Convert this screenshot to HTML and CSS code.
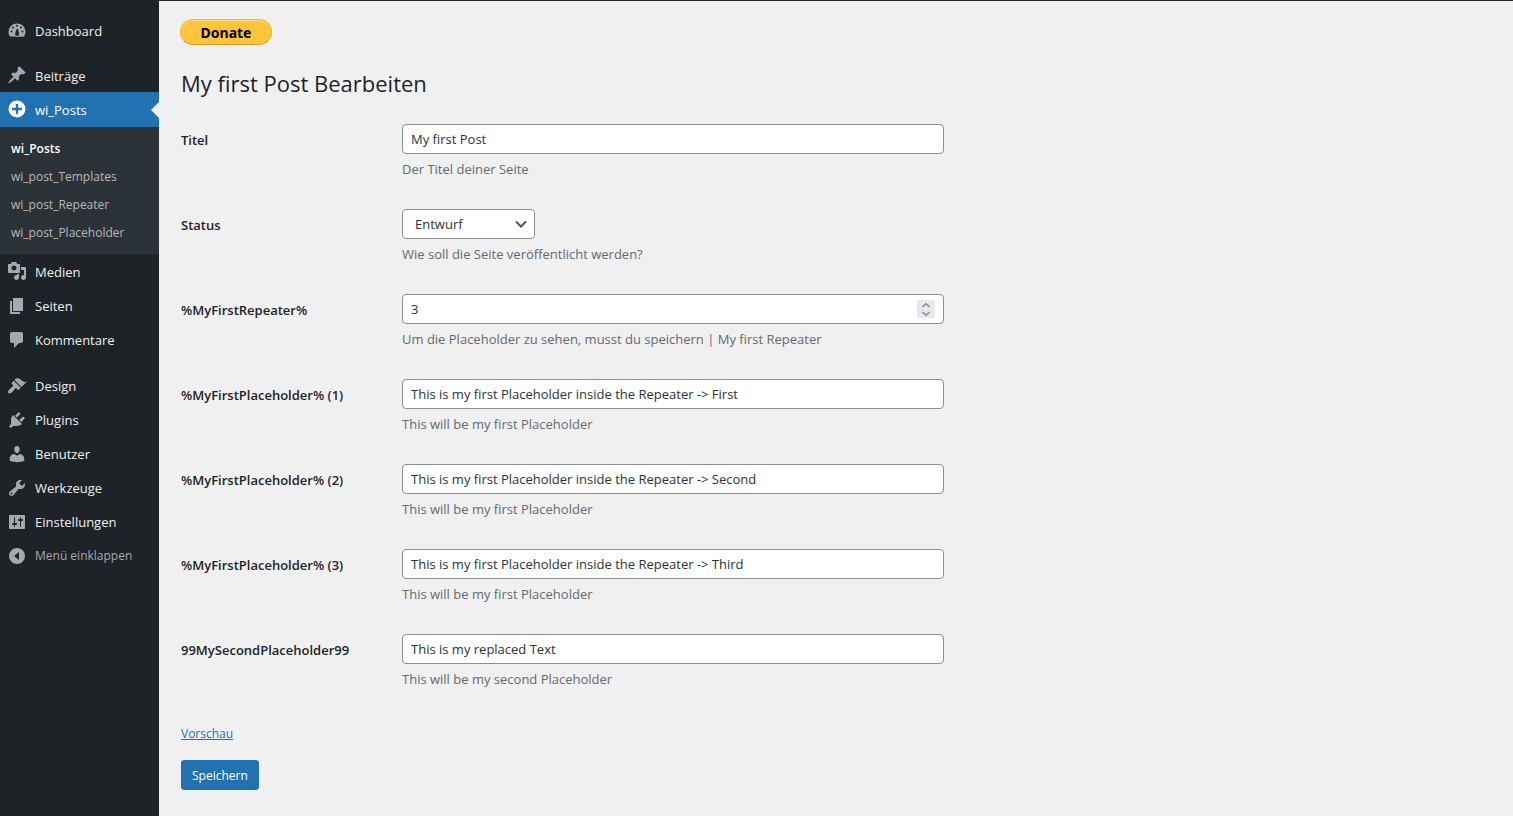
FILE: index.html
```html
<!DOCTYPE html>
<html lang="de">
<head>
    <meta charset="UTF-8">
    <meta name="viewport" content="width=device-width, initial-scale=1.0">
    <title>My first Post Bearbeiten</title>
    <link rel="stylesheet" href="styles.css">
</head>
<body>
    <nav class="admin-menu">
        <ul class="menu">
            <li>
                <a href="#" class="menu-link">
                    <svg class="icon" viewBox="0 1 20 20"><path fill-rule="evenodd" d="M3 16.500C2.200 15.500 1.500 13.700 1.500 11.500a8.500 8 0 0 1 17 0c0 2.200-.7 4-1.500 5-.5.500-13.500.500-14 0zM9.500 9 8.300 13a2 2 0 1 0 3.600 0L11 9zM10 4.800a1 1 0 1 0 0 2 1 1 0 0 0 0-2zM6 6.500a1 1 0 1 0 0 2 1 1 0 0 0 0-2zm8 0a1 1 0 1 0 0 2 1 1 0 0 0 0-2zM4.500 10.500a1 1 0 1 0 0 2 1 1 0 0 0 0-2zm11 0a1 1 0 1 0 0 2 1 1 0 0 0 0-2z"/></svg>
                    Dashboard
                </a>
            </li>
            <li class="group-start">
                <a href="#" class="menu-link">
                    <svg class="icon" viewBox="0 1 20 20"><path d="M10.440 3.020l1.820-1.820 6.360 6.350-1.830 1.820c-1.050-.68-2.480-.57-3.410.36l-.75.75c-.92.93-1.040 2.350-.35 3.410l-1.830 1.820-2.410-2.410-2.800 2.790c-.42.42-3.380 2.710-3.800 2.290s1.860-3.390 2.280-3.810l2.790-2.790L4.100 9.360l1.830-1.820c1.050.69 2.480.57 3.400-.36l.75-.75c.93-.92 1.050-2.350.36-3.410z"/></svg>
                    Beiträge
                </a>
            </li>
            <li class="current">
                <a href="#" class="menu-link">
                    <svg class="icon" viewBox="0 1 20 20"><path fill-rule="evenodd" d="M10 1.500a8.500 8.500 0 1 0 0 17 8.500 8.500 0 0 0 0-17zM8.800 5h2.400v3.800H15v2.400h-3.800V15H8.800v-3.800H5V8.800h3.800z"/></svg>
                    wi_Posts
                </a>
                <ul class="submenu">
                    <li class="selected"><a href="#">wi_Posts</a></li>
                    <li><a href="#">wi_post_Templates</a></li>
                    <li><a href="#">wi_post_Repeater</a></li>
                    <li><a href="#">wi_post_Placeholder</a></li>
                </ul>
            </li>
            <li>
                <a href="#" class="menu-link">
                    <svg class="icon" viewBox="0 1 20 20"><path fill-rule="evenodd" d="M13 11V4c0-.55-.45-1-1-1h-1.670L9 1H5L3.670 3H2c-.55 0-1 .45-1 1v7c0 .55.45 1 1 1h10c.55 0 1-.45 1-1zM7 4.500c1.380 0 2.500 1.120 2.500 2.500S8.380 9.500 7 9.500 4.500 8.380 4.500 7 5.620 4.500 7 4.500zM14 6h5v10.500c0 1.380-1.120 2.500-2.500 2.500S14 17.880 14 16.500s1.120-2.500 2.500-2.500c.17 0 .34.02.5.05V9h-3V6zm-4 8.050V13h2v3.500c0 1.380-1.120 2.500-2.500 2.500S7 17.880 7 16.500 8.120 14 9.500 14c.17 0 .34.02.5.05z"/></svg>
                    Medien
                </a>
            </li>
            <li>
                <a href="#" class="menu-link">
                    <svg class="icon" viewBox="0 0 20 20"><path d="M6 15V2h10v13H6zm-1 1h8v2H3V5h2v11z"/></svg>
                    Seiten
                </a>
            </li>
            <li>
                <a href="#" class="menu-link">
                    <svg class="icon" viewBox="0 0 20 20"><path d="M5 2h9c1.100 0 2 .9 2 2v7c0 1.100-.9 2-2 2h-2l-5 5v-5H5c-1.100 0-2-.9-2-2V4c0-1.100.9-2 2-2z"/></svg>
                    Kommentare
                </a>
            </li>
            <li class="group-start">
                <a href="#" class="menu-link">
                    <svg class="icon" viewBox="0 0 20 20"><path d="M14.480 11.060L7.410 3.990l1.500-1.500c.5-.56 2.300-.47 3.510.32 1.210.8 1.430 1.280 2.910 2.100 1.180.64 2.450 1.260 4.450.85zm-.71.71L6.700 4.700 4.930 6.470c-.39.39-.39 1.020 0 1.410l1.060 1.060c.39.39.39 1.030 0 1.420-.6.6-1.430 1.110-2.210 1.690-.35.26-.7.53-1.010.84C1.430 14.230.4 16.080 1.400 17.070c.99 1 2.840-.03 4.180-1.360.31-.31.58-.66.85-1.020.57-.78 1.080-1.610 1.690-2.210.39-.39 1.020-.39 1.410 0l1.060 1.060c.39.39 1.020.39 1.410 0z"/></svg>
                    Design
                </a>
            </li>
            <li>
                <a href="#" class="menu-link">
                    <svg class="icon" viewBox="0 0 20 20"><path d="M13.110 4.360L9.870 7.600 8 5.730l3.240-3.240c.35-.34 1.050-.2 1.560.32.52.51.66 1.210.31 1.550zm-8 1.770l.91-1.120 9.010 9.010-1.190.84c-.71.71-2.630 1.160-3.820 1.160H6.140L4.900 17.260c-.59.59-1.540.59-2.120 0-.59-.58-.59-1.530 0-2.120l1.240-1.240v-3.880c0-1.130.4-3.190 1.090-3.890zm7.260 3.970l3.240-3.240c.34-.35 1.040-.21 1.550.31.52.51.66 1.210.31 1.550l-3.240 3.250z"/></svg>
                    Plugins
                </a>
            </li>
            <li>
                <a href="#" class="menu-link">
                    <svg class="icon" viewBox="0 0 20 20"><path d="M10 9.250c-2.270 0-2.730-3.440-2.730-3.440C7 4.020 7.820 2 9.970 2c2.160 0 2.980 2.020 2.710 3.810 0 0-.41 3.440-2.680 3.440zm0 2.570L12.720 10c2.390 0 4.520 2.330 4.520 4.530v2.490s-3.650 1.130-7.240 1.130c-3.650 0-7.240-1.130-7.240-1.130v-2.490c0-2.250 1.940-4.480 4.470-4.480z"/></svg>
                    Benutzer
                </a>
            </li>
            <li>
                <a href="#" class="menu-link">
                    <svg class="icon" viewBox="0 0 20 20"><path fill-rule="evenodd" d="M16.680 9.770c-1.340 1.340-3.300 1.670-4.950.99l-5.410 6.520c-.99.99-2.590.99-3.580 0s-.99-2.590 0-3.570l6.520-5.420c-.68-1.650-.35-3.610.99-4.950 1.280-1.280 3.120-1.620 4.720-1.060l-2.890 2.890 2.820 2.820 2.860-2.870c.53 1.580.18 3.390-1.080 4.650zM3.810 16.210c.4.39 1.040.39 1.430 0 .4-.4.4-1.040 0-1.430-.39-.4-1.030-.4-1.430 0-.39.39-.39 1.030 0 1.430z"/></svg>
                    Werkzeuge
                </a>
            </li>
            <li>
                <a href="#" class="menu-link">
                    <svg class="icon" viewBox="0 0 20 20"><path fill-rule="evenodd" d="M18 16V4c0-.55-.45-1-1-1H3c-.55 0-1 .45-1 1v12c0 .55.45 1 1 1h14c.55 0 1-.45 1-1zM8 11h1c.55 0 1 .45 1 1s-.45 1-1 1H8v1.500c0 .28-.22.5-.5.5s-.5-.22-.5-.5V13H6c-.55 0-1-.45-1-1s.45-1 1-1h1V5.500c0-.28.22-.5.5-.5s.5.22.5.5V11zm5-2h-1c-.55 0-1-.45-1-1s.45-1 1-1h1V5.500c0-.28.22-.5.5-.5s.5.22.5.5V7h1c.55 0 1 .45 1 1s-.45 1-1 1h-1v5.500c0 .28-.22.5-.5.5s-.5-.22-.5-.5V9z"/></svg>
                    Einstellungen
                </a>
            </li>
            <li>
                <button type="button" class="menu-link collapse">
                    <svg class="icon" viewBox="0 0 20 20"><path fill-rule="evenodd" d="M10 2a8 8 0 1 0 0 16 8 8 0 0 0 0-16zm2 4v8l-5-4z"/></svg>
                    Menü einklappen
                </button>
            </li>
        </ul>
    </nav>

    <main class="content">
        <button type="button" class="donate">Donate</button>
        <h1>My first Post Bearbeiten</h1>

        <form>
            <div class="form-row">
                <label for="titel">Titel</label>
                <div class="field">
                    <input type="text" id="titel" value="My first Post">
                    <p>Der Titel deiner Seite</p>
                </div>
            </div>
            <div class="form-row">
                <label for="status">Status</label>
                <div class="field">
                    <select id="status">
                        <option>Entwurf</option>
                        <option>Veröffentlicht</option>
                    </select>
                    <p>Wie soll die Seite veröffentlicht werden?</p>
                </div>
            </div>
            <div class="form-row">
                <label for="repeater">%MyFirstRepeater%</label>
                <div class="field">
                    <div class="number">
                        <input type="number" id="repeater" value="3">
                        <div class="spinner">
                            <button type="button" aria-label="Erhöhen"><svg viewBox="0 0 10 6"><path d="M2 4.500 5 2l3 2.500"/></svg></button>
                            <button type="button" aria-label="Verringern"><svg viewBox="0 0 10 6"><path d="M2 1.500 5 4l3-2.500"/></svg></button>
                        </div>
                    </div>
                    <p>Um die Placeholder zu sehen, musst du speichern | My first Repeater</p>
                </div>
            </div>
            <div class="form-row">
                <label for="placeholder1">%MyFirstPlaceholder% (1)</label>
                <div class="field">
                    <input type="text" id="placeholder1" value="This is my first Placeholder inside the Repeater -&gt; First">
                    <p>This will be my first Placeholder</p>
                </div>
            </div>
            <div class="form-row">
                <label for="placeholder2">%MyFirstPlaceholder% (2)</label>
                <div class="field">
                    <input type="text" id="placeholder2" value="This is my first Placeholder inside the Repeater -&gt; Second">
                    <p>This will be my first Placeholder</p>
                </div>
            </div>
            <div class="form-row">
                <label for="placeholder3">%MyFirstPlaceholder% (3)</label>
                <div class="field">
                    <input type="text" id="placeholder3" value="This is my first Placeholder inside the Repeater -&gt; Third">
                    <p>This will be my first Placeholder</p>
                </div>
            </div>
            <div class="form-row">
                <label for="second">99MySecondPlaceholder99</label>
                <div class="field">
                    <input type="text" id="second" value="This is my replaced Text">
                    <p>This will be my second Placeholder</p>
                </div>
            </div>

            <a href="#" class="preview">Vorschau</a>
            <button type="submit" class="save">Speichern</button>
        </form>
    </main>
</body>
</html>
```

FILE: styles.css
```css
/* Allgemein */
* {
    box-sizing: border-box;
}

body {
    display: flex;
    min-height: 100vh;
    margin: 0;
    background-color: #f0f0f0;
    color: #1d2327;
    font-family: "Open Sans", "Noto Sans", sans-serif;
    font-size: 13px;
    line-height: 20px;
}

input,
select,
button {
    font: inherit;
    color: inherit;
}

ul {
    margin: 0;
    padding: 0;
    list-style: none;
}

/* Menü */
.admin-menu {
    flex: none;
    width: 159px;
    padding-top: 14px;
    background-color: #1d2327;
}

.menu-link {
    position: relative;
    display: flex;
    align-items: center;
    gap: 8px;
    width: 100%;
    height: 34px;
    padding: 0 7px;
    border: 0;
    background: none;
    color: #f0f0f1;
    text-decoration: none;
    white-space: nowrap;
}

.icon {
    flex: none;
    width: 20px;
    height: 20px;
    fill: #a7aaad;
}

.group-start {
    margin-top: 11px;
}

.current {
    margin-top: -1px;
    margin-bottom: 1px;
}

.current ~ .group-start {
    margin-top: 12px;
}

.current .menu-link {
    height: 35px;
    background-color: #2271b1;
    color: #fff;
}

.current .menu-link::after {
    content: "";
    position: absolute;
    right: 0;
    top: 50%;
    margin-top: -8px;
    border: 8px solid transparent;
    border-left-width: 0;
    border-right-color: #f0f0f0;
}

.current .icon {
    fill: #fff;
}

.submenu {
    padding: 8px 0 7px;
    background-color: #2c3338;
}

.submenu a {
    display: block;
    padding: 0 11px;
    color: #b5b9bc;
    font-size: 12px;
    line-height: 28px;
    text-decoration: none;
}

.submenu .selected a {
    color: #fff;
    font-weight: 600;
}

.collapse {
    color: #a7aaad;
    font-size: 12px;
    cursor: pointer;
}

/* Inhalt */
.content {
    flex: 1;
    padding: 18px 22px 20px;
    border-top: 1px solid #1d2327;
}

.donate {
    display: block;
    width: 92px;
    height: 26px;
    margin-left: -1px;
    padding: 1px 0 0;
    border: 1px solid #f0b73a;
    border-bottom-color: #d9a02b;
    border-radius: 13px;
    background-color: #ffc439;
    box-shadow: inset 0 1px #ffdc88;
    color: #000;
    font-family: "Noto Sans", sans-serif;
    font-size: 14px;
    font-weight: 700;
    cursor: pointer;
}

h1 {
    margin: 23px 0 26px;
    font-size: 22px;
    font-weight: 400;
    line-height: 30px;
}

.form-row {
    display: grid;
    grid-template-columns: 221px minmax(0, 542px);
    margin-bottom: 30px;
}

.form-row label {
    padding-top: 6px;
    font-weight: 600;
}

.field p {
    margin: 5px 0 0;
    color: #646970;
}

.field input,
.field select,
.number {
    width: 100%;
    height: 30px;
    padding: 0 8px;
    border: 1px solid #8c8f94;
    border-radius: 4px;
    background-color: #fff;
    color: #2c3338;
}

.field select {
    display: block;
    width: 133px;
    padding-left: 12px;
    appearance: none;
    background-image: url("data:image/svg+xml,%3Csvg xmlns='http://www.w3.org/2000/svg' viewBox='0 0 16 16'%3E%3Cpath d='M3 5.500l5 5 5-5' fill='none' stroke='%23555' stroke-width='2'/%3E%3C/svg%3E");
    background-repeat: no-repeat;
    background-position: right 5px center;
    background-size: 16px;
}

.field input[type="text"] {
    display: block;
}

.number {
    display: flex;
    align-items: center;
    padding: 0 8px 0 0;
}

.number input {
    flex: 1;
    height: 28px;
    border: 0;
    background: none;
    appearance: textfield;
}

.number input::-webkit-inner-spin-button {
    appearance: none;
}

.spinner {
    width: 18px;
    background-color: #e9e9ed;
}

.spinner button {
    display: block;
    width: 18px;
    height: 9px;
    padding: 0 3px;
    border: 0;
    background: none;
}

.spinner svg {
    display: block;
    width: 12px;
    height: 8px;
    fill: none;
    stroke: #8f8f9d;
    stroke-width: 1.3;
}

.preview {
    display: table;
    margin-top: 35px;
    color: #2271b1;
    font-size: 12px;
}

.save {
    display: block;
    height: 30px;
    margin-top: 16px;
    padding: 2px 10px 0;
    border: 1px solid #2271b1;
    border-radius: 3px;
    background-color: #2271b1;
    color: #fff;
    font-size: 12px;
    cursor: pointer;
}
```
